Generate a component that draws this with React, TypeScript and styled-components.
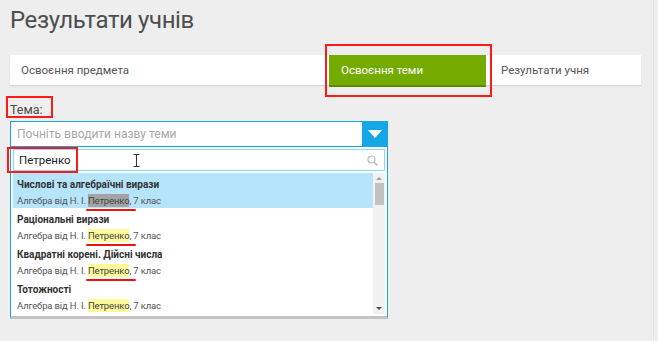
import styled, { createGlobalStyle } from "styled-components";

const GlobalStyle = createGlobalStyle`
	body {
		margin: 0;
		background: #eeeeee;
		font-family: Roboto, "Open Sans", sans-serif;
	}
`;

const items = [
	{ title: "Числові та алгебраїчні вирази", active: true },
	{ title: "Раціональні вирази", active: false },
	{ title: "Квадратні корені. Дійсні числа", active: false },
	{ title: "Тотожності", active: false },
];

export default function App() {
	return (
		<>
			<GlobalStyle />
			<Page>
				<Title>Результати учнів</Title>
				<Tabs>
					<Tab $width="319px">Освоєння предмета</Tab>
					<Tab $active $width="157px">Освоєння теми</Tab>
					<Tab $pad="15px">Результати учня</Tab>
				</Tabs>
				<Label>Тема:</Label>
				<Select>
					<Placeholder>Почніть вводити назву теми</Placeholder>
					<SelectButton>
						<svg width="14" height="8" viewBox="0 0 14 8">
							<path d="M0 0 H14 L7 8 Z" fill="#fff" />
						</svg>
					</SelectButton>
				</Select>
				<Dropdown>
					<Search>
						<SearchText>Петренко</SearchText>
						<Caret>
							<svg width="7" height="13" viewBox="0 0 7 13">
								<path d="M0.5 0.5 H6.5 M3.5 0.5 V12.5 M0.5 12.5 H6.5" stroke="#333" strokeWidth="1" fill="none" />
							</svg>
						</Caret>
						<SearchIcon>
							<svg width="11" height="11" viewBox="0 0 11 11">
								<circle cx="4.5" cy="4.5" r="3.5" stroke="#bbb" strokeWidth="1.2" fill="none" />
								<path d="M7 7 L10.5 10.5" stroke="#bbb" strokeWidth="1.6" />
							</svg>
						</SearchIcon>
					</Search>
					<ListWrap>
						<List>
							{items.map((item) => (
								<Item key={item.title} $active={item.active}>
									<ItemTitle>{item.title}</ItemTitle>
									<ItemSub>
										Алгебра від Н. І. <Mark $active={item.active}>Петренко</Mark>, 7 клас
									</ItemSub>
								</Item>
							))}
						</List>
						<Scrollbar>
							<Arrow $up />
							<Thumb />
							<Arrow />
						</Scrollbar>
					</ListWrap>
				</Dropdown>
			</Page>
		</>
	);
}

const Page = styled.div`
	position: relative;
	height: 341px;
	padding: 0 12px 0 10px;
	box-sizing: border-box;
	border-right: 1px solid #e2e2e2;
	width: 654px;
`;

const Title = styled.h1`
	margin: 0;
	padding-top: 2px;
	font-weight: 400;
	font-size: 24px;
	letter-spacing: -0.4px;
	line-height: 36px;
	color: #4d4d4d;
`;

const Tabs = styled.div`
	display: flex;
	align-items: flex-start;
	margin-top: 17px;
	height: 30px;
	background: #fff;
	box-shadow: 0 1px 1px rgba(0, 0, 0, 0.12);
`;

const Tab = styled.div<{ $active?: boolean; $width?: string; $pad?: string }>`
	position: relative;
	box-sizing: border-box;
	flex: ${(p) => (p.$width ? "none" : "1")};
	width: ${(p) => p.$width || "auto"};
	height: ${(p) => (p.$active ? "32px" : "30px")};
	padding-left: ${(p) => p.$pad || (p.$active ? "12px" : "11px")};
	line-height: 31px;
	font-size: 11.5px;
	color: ${(p) => (p.$active ? "#fff" : "#555")};
	background: ${(p) => (p.$active ? "#74ab00" : "transparent")};
	border-bottom: ${(p) => (p.$active ? "2px solid #5c8a00" : "none")};

	&::after {
		content: "";
		display: ${(p) => (p.$active ? "block" : "none")};
		position: absolute;
		left: -4px;
		right: -6px;
		top: -11px;
		bottom: -12px;
		border: 2px solid #ff1a1a;
	}
`;

const Label = styled.div`
	position: relative;
	margin-top: 17px;
	font-size: 12.5px;
	line-height: 16px;
	color: #4a4a4a;

	&::after {
		content: "";
		position: absolute;
		left: -4px;
		top: -6px;
		width: 43px;
		height: 18px;
		border: 2px solid #ff1a1a;
	}
`;

const Select = styled.div`
	display: flex;
	margin-top: 3px;
	width: 378px;
	height: 26px;
	box-sizing: border-box;
	border: 1px solid #15a6e8;
	background: #fff;
`;

const Placeholder = styled.div`
	flex: 1;
	padding-left: 6px;
	font-size: 12px;
	line-height: 25px;
	color: #a8a8a8;
`;

const SelectButton = styled.div`
	width: 25px;
	display: flex;
	align-items: center;
	justify-content: center;
	background: #15a6e8;
`;

const Dropdown = styled.div`
	width: 378px;
	box-sizing: border-box;
	border: 1px solid #15a6e8;
	border-top: none;
	border-bottom: 3px solid #c4c4c4;
	background: #fff;
	padding: 2px;
`;

const Search = styled.div`
	position: relative;
	display: flex;
	align-items: center;
	height: 22px;
	box-sizing: border-box;
	border: 1px solid #8fd4f5;
	padding: 0 6px 0 5px;

	&::before {
		content: "";
		position: absolute;
		left: -7px;
		top: -3px;
		width: 67px;
		height: 22px;
		border: 2px solid #ff1a1a;
	}
`;

const SearchText = styled.div`
	flex: 1;
	font-size: 11.5px;
	color: #222;
	line-height: 20px;
`;

const Caret = styled.div`
	position: absolute;
	left: 119px;
	top: 2px;
`;

const SearchIcon = styled.div`
	display: flex;
	margin-top: 1px;
`;

const ListWrap = styled.div`
	display: flex;
	margin-top: 2px;
	height: 141px;
	overflow: hidden;
`;

const List = styled.div`
	flex: 1;
`;

const Item = styled.div<{ $active: boolean }>`
	height: 35px;
	box-sizing: border-box;
	padding: 5px 0 0 4px;
	background: ${(p) => (p.$active ? "#b5e4fb" : "#fff")};
`;

const ItemTitle = styled.div`
	font-size: 10px;
	font-weight: 700;
	color: #333;
	line-height: 14px;
`;

const ItemSub = styled.div`
	font-size: 9.5px;
	letter-spacing: -0.15px;
	color: #555;
	line-height: 17px;
`;

const Mark = styled.span<{ $active: boolean }>`
	position: relative;
	background: ${(p) => (p.$active ? "#a3a3a3" : "#fdfa9c")};
	color: #444;
	padding: 1px 0;

	&::after {
		content: "";
		position: absolute;
		left: -2px;
		right: -7px;
		bottom: -4px;
		height: 2px;
		border-radius: 1px;
		background: #ee1111;
	}
`;

const Scrollbar = styled.div`
	width: 12px;
	display: flex;
	flex-direction: column;
	align-items: center;
	background: #f1f1f1;
	padding: 4px 0;
	box-sizing: border-box;
`;

const Thumb = styled.div`
	width: 9px;
	height: 22px;
	margin-top: 3px;
	background: #c1c1c1;
	flex: none;
`;

const Arrow = styled.div<{ $up?: boolean }>`
	width: 0;
	height: 0;
	border-left: 3px solid transparent;
	border-right: 3px solid transparent;
	${(p) => (p.$up ? "border-bottom: 3px solid #a0a0a0;" : "border-top: 3px solid #505050; margin-top: auto;")}
`;
